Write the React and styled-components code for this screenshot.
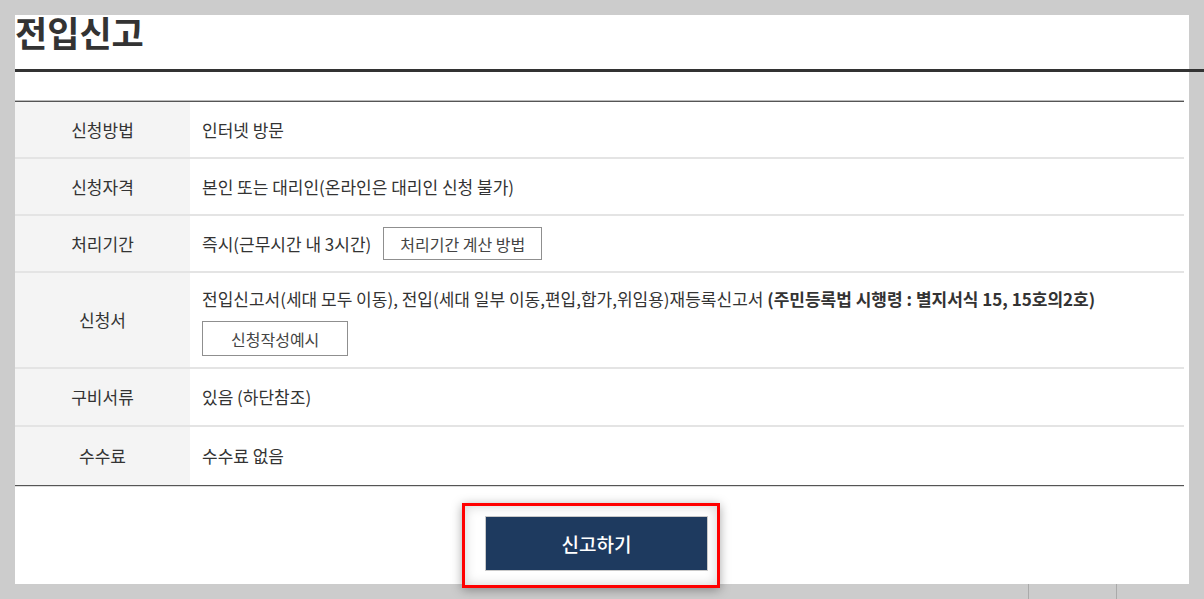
import React from "react";
import styled, { createGlobalStyle } from "styled-components";

const Global = createGlobalStyle`
  html, body {
    margin: 0;
    padding: 0;
    background: #cccccc;
    height: 599px;
    overflow: hidden;
  }
  body {
    font-family: "Noto Sans CJK KR", "Noto Sans", sans-serif;
    color: #333333;
  }
  * { box-sizing: border-box; }
`;

const Page = styled.div`
  padding: 15px 0 0 15px;
`;

const Panel = styled.section`
  width: 1174px;
  height: 569px;
  background: #ffffff;
  display: flex;
  flex-direction: column;
`;

const Title = styled.h2`
  margin: 0 -15px 0 0;
  padding: 2px 0 22px 0;
  font-size: 35px;
  line-height: 30px;
  font-weight: 700;
  letter-spacing: 0;
  color: #333333;
  border-bottom: 3px solid #333333;
`;

const Table = styled.div`
  margin: 29px 5px 0 0;
  border-top: 1px solid #555555;
  border-bottom: 1px solid #555555;
  box-shadow: 0 -1px 0 #bbbbbb, 0 1px 0 #dddddd;
`;

const Row = styled.div`
  display: grid;
  grid-template-columns: 175px 1fr;
  min-height: ${(p) => p.$h || 57}px;
  border-bottom: ${(p) => (p.$last ? "none" : "2px solid #e4e4e4")};
`;

const Label = styled.div`
  background: #f4f4f4;
  display: flex;
  align-items: center;
  justify-content: center;
  font-size: 17px;
  line-height: 24px;
  letter-spacing: 0;
`;

const Value = styled.div`
  padding: ${(p) => (p.$stack ? "14px 12px 11px" : "0 12px")};
  display: flex;
  flex-direction: ${(p) => (p.$stack ? "column" : "row")};
  align-items: ${(p) => (p.$stack ? "flex-start" : "center")};
  gap: ${(p) => (p.$stack ? "10px" : "12px")};
  font-size: 17px;
  line-height: 24px;
  letter-spacing: 0;
`;

const Strong = styled.strong`
  font-weight: 700;
`;

const OutlineButton = styled.button`
  font-family: inherit;
  height: ${(p) => p.$h || 33}px;
  padding: 0 ${(p) => p.$px || 16}px;
  background: #ffffff;
  border: 1px solid #8f8f8f;
  color: #444444;
  font-size: 16px;
  letter-spacing: 0;
  cursor: pointer;
`;

const ActionArea = styled.div`
  display: flex;
  justify-content: center;
  margin-top: 17px;
`;

const Highlight = styled.div`
  margin-right: 22px;
  border: 3px solid #ff0000;
  padding: 10px 9px 14px 20px;
  background: #ffffff;
  box-shadow: 0 2px 10px rgba(0, 0, 0, 0.35), inset 0 0 12px rgba(0, 0, 0, 0.18);
`;

const SubmitButton = styled.button`
  font-family: inherit;
  width: 223px;
  height: 55px;
  background: #1e3a5f;
  border: 1px solid #c9c9c9;
  color: #ffffff;
  font-size: 19px;
  font-weight: 500;
  letter-spacing: 0;
  cursor: pointer;
`;

const Footer = styled.div`
  display: flex;
  justify-content: flex-end;
  height: 15px;
`;

const FooterCell = styled.div`
  width: 88px;
  border-left: 1px solid #aaaaaa;
`;

const rows = [
  { label: "신청방법", value: "인터넷 방문" },
  { label: "신청자격", value: "본인 또는 대리인(온라인은 대리인 신청 불가)" },
];

export default function App() {
  return (
    <>
      <Global />
      <Page>
        <Panel>
          <Title>전입신고</Title>
          <Table>
            {rows.map((r) => (
              <Row key={r.label}>
                <Label>{r.label}</Label>
                <Value>{r.value}</Value>
              </Row>
            ))}
            <Row>
              <Label>처리기간</Label>
              <Value>
                즉시(근무시간 내 3시간)
                <OutlineButton>처리기간 계산 방법</OutlineButton>
              </Value>
            </Row>
            <Row $h={95}>
              <Label>신청서</Label>
              <Value $stack>
                <span>
                  전입신고서(세대 모두 이동), 전입(세대 일부 이동,편입,합가,위임용)재등록신고서{" "}
                  <Strong>(주민등록법 시행령 : 별지서식 15, 15호의2호)</Strong>
                </span>
                <OutlineButton $h={35} $px={28}>신청작성예시</OutlineButton>
              </Value>
            </Row>
            <Row $h={58}>
              <Label>구비서류</Label>
              <Value>있음 (하단참조)</Value>
            </Row>
            <Row $h={58} $last>
              <Label>수수료</Label>
              <Value>수수료 없음</Value>
            </Row>
          </Table>
          <ActionArea>
            <Highlight>
              <SubmitButton>신고하기</SubmitButton>
            </Highlight>
          </ActionArea>
        </Panel>
        <Footer>
          <FooterCell />
          <FooterCell />
        </Footer>
      </Page>
    </>
  );
}
